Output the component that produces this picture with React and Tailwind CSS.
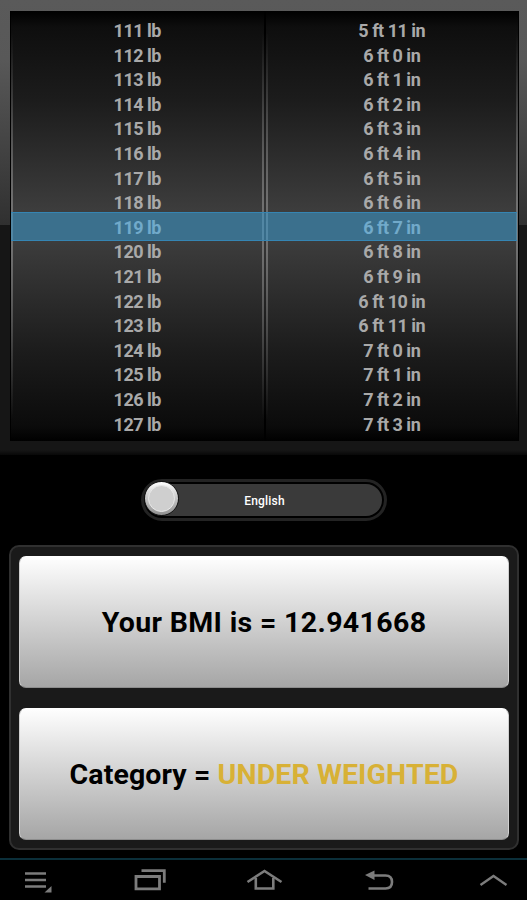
import { clsx } from 'clsx';

const weights = [111, 112, 113, 114, 115, 116, 117, 118, 119, 120, 121, 122, 123, 124, 125, 126, 127];

const heights = [
  '5 ft 11 in',
  '6 ft 0 in',
  '6 ft 1 in',
  '6 ft 2 in',
  '6 ft 3 in',
  '6 ft 4 in',
  '6 ft 5 in',
  '6 ft 6 in',
  '6 ft 7 in',
  '6 ft 8 in',
  '6 ft 9 in',
  '6 ft 10 in',
  '6 ft 11 in',
  '7 ft 0 in',
  '7 ft 1 in',
  '7 ft 2 in',
  '7 ft 3 in',
];

function WheelEdge() {
  return <div className="w-[2px] shrink-0 bg-[linear-gradient(transparent_5%,#707070_45%,#707070_55%,transparent_95%)]" />;
}

function Wheel({ items, selected }) {
  return (
    <ul className="flex-1 pt-[8px] text-center text-[18px] leading-[24.6px] font-bold tracking-[-0.5px]">
      {items.map((item) => (
        <li key={item} className={item === selected ? 'text-[#b4bcc4]' : 'text-[#a9a9a9]'}>
          {item}
        </li>
      ))}
    </ul>
  );
}

function Picker() {
  return (
    <section className="h-[455px] bg-[linear-gradient(#5a5a5a_0px,#585858_60px,#303030_225px,#161616_225px,#161616_450px,#080808_455px)] pt-[11px] pr-[8px] pl-[10px]">
      <div className="relative flex h-[430px] bg-black px-px">
        <div className="flex flex-1 bg-[linear-gradient(#000_0px,#0e0e0e_16px,#1c1c1c_90px,#3d3d3d_200px,#3d3d3d_228px,#1c1c1c_340px,#0b0b0b_415px,#000_430px)]">
          <WheelEdge />
          <Wheel items={weights.map((w) => `${w} lb`)} selected="119 lb" />
          <WheelEdge />
          <div className="w-[2px] bg-[linear-gradient(#000_5%,#333_45%,#333_55%,#000_95%)]" />
          <WheelEdge />
          <Wheel items={heights} selected="6 ft 7 in" />
          <WheelEdge />
        </div>
        <div className="absolute top-[201px] right-[2px] left-px h-[29px] border-y border-[#3585b3] bg-[#3b9bd0]/55" />
      </div>
    </section>
  );
}

function UnitSwitch() {
  return (
    <div className="flex h-[90px] justify-center pt-[24px]">
      <button
        type="button"
        className="relative flex h-[42px] w-[246px] items-center justify-center rounded-full border-[3px] border-[#232323] bg-black p-[2px]"
      >
        <span className="flex h-full w-full items-center justify-center rounded-full bg-[#3a3a3a] pt-px pl-[2px] text-[12px] font-medium tracking-[0.2px] text-white">
          English
        </span>
        <span className="absolute -top-px left-0 flex size-[35px] items-center justify-center rounded-full border border-[#111] bg-linear-to-b from-white to-[#909090]">
          <span className="size-[27px] rounded-full border border-[#e8e8e8] bg-[#cfcfcf]" />
        </span>
      </button>
    </div>
  );
}

function ResultCard({ children, className }) {
  return (
    <div
      className={clsx(
        'flex h-[132px] items-center justify-center rounded-[7px] border border-t-white border-x-[#d0d0d0] border-b-[#8c8c8c] bg-linear-to-b from-white to-[#a5a5a5] bg-origin-border pt-[2px] text-[28.5px] font-bold whitespace-pre text-black',
        className
      )}
    >
      {children}
    </div>
  );
}

function NavBar() {
  return (
    <nav className="mt-auto h-[42px] border-t-2 border-[#0b2f3a] bg-black">
      <svg width="527" height="40" viewBox="0 860 527 40" fill="none" stroke="#7c7c7c" strokeWidth="2.8">
        <path d="M25 873.5h21M25 880h21M25 886.5h21" strokeWidth="2.6" />
        <path d="M51.5 886v6.5h-7z" fill="#7c7c7c" stroke="none" />
        <path d="M136 876.5h23.5v12.3h-23.500z" />
        <path d="M141.5 870.7h22.800v12" />
        <path d="M247.500 882l17-11 17 11" strokeWidth="2.6" />
        <path d="M255.800 878v10.500h17.500v-10.500" strokeWidth="2.6" />
        <path d="M372 875.500h13.500q6.500 0 6.500 6.500t-6.500 6.500h-17" strokeWidth="2.6" />
        <path d="M365 875l9.500-4.500v9.500z" fill="#7c7c7c" stroke="none" />
        <path d="M480.500 885l13-9 13 9" strokeWidth="2.4" />
      </svg>
    </nav>
  );
}

export default function App() {
  return (
    <div className="flex h-[900px] w-[527px] flex-col overflow-hidden bg-black font-['Roboto','Liberation_Sans',sans-serif]">
      <Picker />
      <UnitSwitch />
      <main className="mr-[8px] ml-[9px] flex h-[305px] flex-col gap-[20px] rounded-[10px] border-2 border-[#303030] bg-[#1a1a1a] px-[8px] pt-[9px]">
        <ResultCard className="tracking-[0.35px]">Your BMI is = 12.941668</ResultCard>
        <ResultCard className="tracking-[0.1px]">
          Category = <span className="text-[#d8b136]">UNDER WEIGHTED</span>
        </ResultCard>
      </main>
      <NavBar />
    </div>
  );
}
